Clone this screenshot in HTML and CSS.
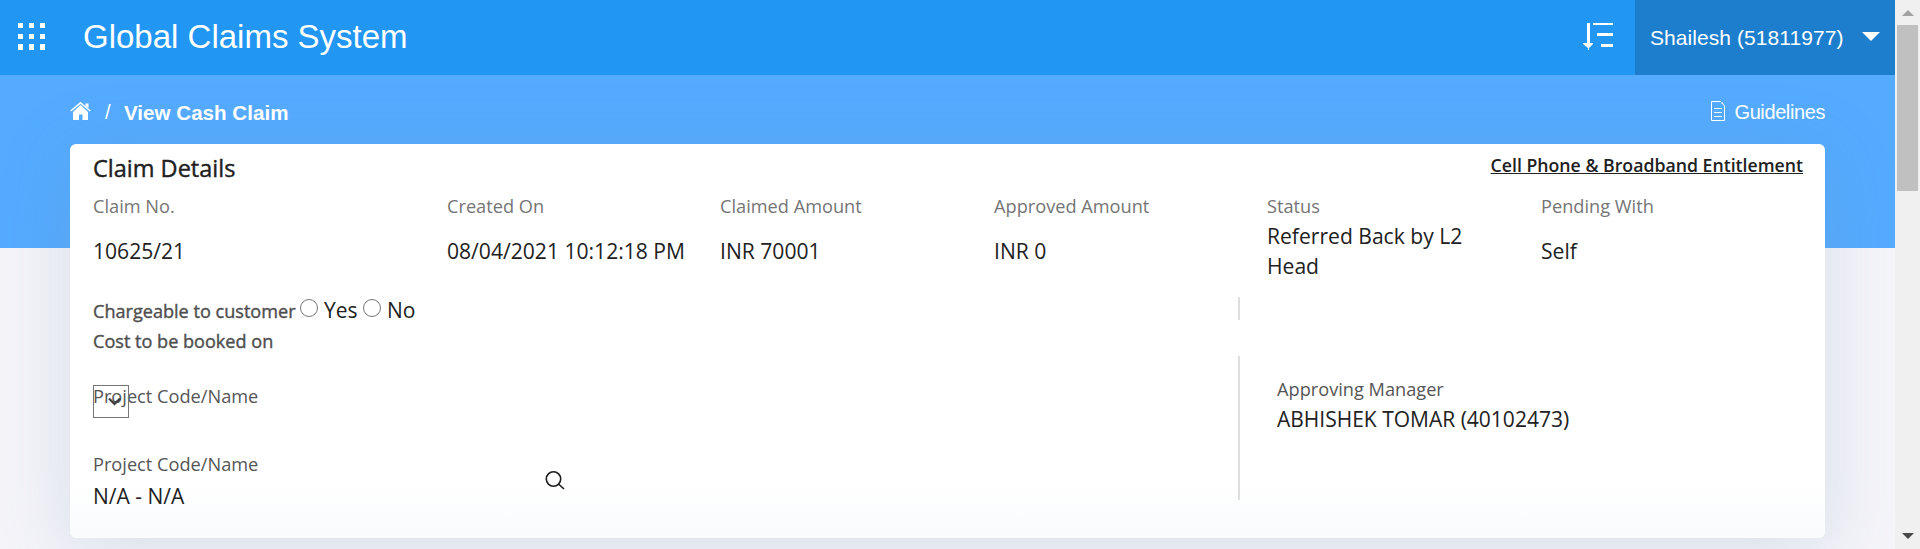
FILE: index.html
```html
<!DOCTYPE html>
<html lang="en">
<head>
<meta charset="utf-8">
<title>Global Claims System</title>
<link rel="stylesheet" href="styles.css">
</head>
<body>
<div class="app">
  <div class="page">
    <header class="topbar">
      <svg class="apps" width="27" height="27" viewBox="0 0 27 27" fill="#fff"><path d="M0 0h5v5H0zM11 0h5v5h-5zM22 0h5v5h-5zM0 11h5v5H0zM11 11h5v5h-5zM22 11h5v5h-5zM0 21h5v6H0zM11 21h5v6h-5zM22 21h5v6h-5z"/></svg>
      <h1 class="brand">Global Claims System</h1>
      <svg class="sort" width="30" height="27" viewBox="0 0 30 27" fill="#fff"><path d="M4 0h3v20h3v1l-4 4v2H5v-2l-5-4v-1h4zM10 0h20v2H10zM14 10h16v3H14zM18 21h12v3H18z"/></svg>
      <div class="user"><span class="user-name">Shailesh (51811977)</span><svg width="18" height="9" viewBox="0 0 18 9"><path d="M0 0h18L9 9z" fill="#fff"/></svg></div>
    </header>
    <main class="main">
      <nav class="crumbs">
        <svg class="home" width="21" height="18" viewBox="0 0 21 18"><path d="M3 10l7.500-7 7.500 7v8h-5.500v-5.500H9V18H3z" fill="#fff"/><path d="M.7 9L10.500.8 20.300 9" fill="none" stroke="#fff" stroke-width="1.500"/><path d="M15.500 1.500h3V6l-3-2z" fill="#fff"/></svg>
        <span class="slash">/</span>
        <b class="current">View Cash Claim</b>
        <span class="guide"><svg width="14" height="20" viewBox="0 0 14 20" fill="none" stroke="#fff"><path d="M10 .500H.5v19h13V5L11 1.500V3M3 7.500h8M3 11.500h8M3 15.500h8"/></svg><span class="guide-text">Guidelines</span></span>
      </nav>
      <section class="card">
        <div class="card-head"><h2 class="title">Claim Details</h2><a class="entitle">Cell Phone &amp; Broadband Entitlement</a></div>
        <dl class="facts">
          <div><dt>Claim No.</dt><dd>10625/21</dd></div>
          <div><dt>Created On</dt><dd>08/04/2021 10:12:18 PM</dd></div>
          <div><dt>Claimed Amount</dt><dd>INR 70001</dd></div>
          <div><dt>Approved Amount</dt><dd>INR 0</dd></div>
          <div><dt>Status</dt><dd><span>Referred Back by L2<br>Head</span></dd></div>
          <div><dt>Pending With</dt><dd>Self</dd></div>
        </dl>
        <div class="lower">
          <div class="booking">
            <div class="line"><span class="strong charge">Chargeable to customer</span><i class="radio"></i><span class="opt yes">Yes</span><i class="radio"></i><span class="opt">No</span></div>
            <div class="line strong">Cost to be booked on</div>
            <div class="project"><span class="label">Project Code/Name</span>
              <span class="select"><svg width="13" height="9" viewBox="0 0 13 9"><path d="M1 1.500l5.500 5.500L12 1.500" fill="none" stroke="#3c3c3c" stroke-width="2.200"/></svg></span></div>
            <div class="chosen">
              <div><div class="label">Project Code/Name</div><div class="value">N/A - N/A</div></div>
              <svg class="search" width="20" height="19" viewBox="0 0 20 19" fill="none" stroke="#1c1c1c" stroke-width="1.600"><circle cx="8.500" cy="8" r="7.200"/><path d="M13.500 13l5.500 5"/></svg>
            </div>
          </div>
          <div class="approver">
            <div class="rule rule-short"></div>
            <div class="rule rule-long"><div class="label">Approving Manager</div><div class="value">ABHISHEK TOMAR (40102473)</div></div>
          </div>
        </div>
      </section>
    </main>
  </div>
  <div class="scrollbar"><svg width="12" height="6" viewBox="0 0 12 6"><path d="M0 6h12L6 0z" fill="#a2a2a2"/></svg><i class="thumb"></i><svg class="down" width="12" height="6" viewBox="0 0 12 6"><path d="M0 0h12L6 6z" fill="#484848"/></svg></div>
</div>
</body>
</html>
```
FILE: styles.css
```css
* { box-sizing: border-box; }
body { margin: 0; font-family: "Open Sans", sans-serif; color: #212121; }
h1, h2, dl, dd { margin: 0; font-weight: 400; }
svg { display: block; flex: none; }
.app { display: flex; width: 100%; height: 549px; overflow: hidden; }
.page { flex: 1; min-width: 0; height: 549px; overflow: hidden; }
.topbar { display: flex; height: 75px; background: #2196f3; color: #fff; font-family: "Liberation Sans", sans-serif; }
.apps { margin: 23px 0 0 18px; }
.brand { margin-left: 38px; font-size: 33px; line-height: 73px; white-space: nowrap; }
.sort { margin: 23px 22px 0 auto; }
.user { display: flex; width: 260px; padding-left: 15px; background: #1c7ecd; }
.user-name { width: 212px; font-size: 21px; letter-spacing: .07px; line-height: 75px; white-space: nowrap; }
.user svg { margin-top: 32px; }
.main { height: 474px; padding: 0 70px; background: linear-gradient(#54abff 173px, #f4f4f9 173px); }
.crumbs { display: flex; height: 69px; color: #fff; font-family: "Liberation Sans", sans-serif; font-size: 20px; line-height: 75px; }
.home { margin-top: 27px; }
.slash { width: 19px; margin-left: 14px; }
.current { font-size: 20.6px; }
.guide { display: flex; margin-left: auto; }
.guide svg { margin: 26px 9px 0 0; }
.guide-text { font-size: 20px; letter-spacing: -.4px; }
.card { height: 394px; padding: 9px 22px 0 23px; border-radius: 6px; background: linear-gradient(#fff 340px, #f9fbfc); box-shadow: 0 10px 70px rgba(115, 140, 175, .22); }
.card-head { display: flex; justify-content: space-between; height: 38px; }
.title { font-size: 23.5px; line-height: 30px; -webkit-text-stroke: .4px; }
.entitle { font-size: 17.7px; line-height: 24px; font-weight: 600; text-decoration: underline; text-decoration-skip-ink: none; text-decoration-thickness: 1px; }
.facts { display: grid; grid-template-columns: 354px 273px 274px 273px 274px 1fr; height: 90px; white-space: nowrap; }
dt { font-size: 18.2px; line-height: 30px; color: #757575; }
dd { display: flex; align-items: center; height: 60px; font-size: 21.1px; line-height: 30px; }
.lower { display: flex; padding-top: 14px; }
.booking { width: 1145px; }
.line { display: flex; height: 30px; line-height: 32px; }
.strong { font-size: 18.1px; -webkit-text-stroke: .4px; color: #4f4f4f; }
.charge { width: 207px; white-space: nowrap; }
.radio { width: 18px; height: 18px; margin-top: 4px; border: 1.5px solid #767676; border-radius: 50%; }
.opt { margin-left: 6px; font-size: 21px; line-height: 31px; }
.yes { width: 39px; }
.project { position: relative; height: 94px; padding-top: 26px; }
.label { font-size: 18.2px; line-height: 31px; color: #555; }
.select { position: absolute; left: 0; top: 30px; width: 36px; height: 33px; border: 1px solid #767676; }
.select svg { margin: 11px 0 0 14px; }
.chosen { display: flex; }
.chosen > div { width: 452px; }
.value { font-size: 21px; line-height: 33px; }
.search { margin-top: 22px; }
.approver { width: 560px; }
.rule { border-left: 2px solid #dedede; }
.rule-short { height: 23px; margin: 2px 0 36px; }
.rule-long { height: 144px; padding: 18px 0 0 37px; }
.approver .value { line-height: 29px; }
.scrollbar { width: 25px; background: #f0f0f0; }
.scrollbar svg { margin: 10px 0 9px 7px; }
.thumb { display: block; width: 21px; height: 166px; margin-left: 2px; background: #c0c0c0; }
.scrollbar .down { margin-top: 342px; }
```
